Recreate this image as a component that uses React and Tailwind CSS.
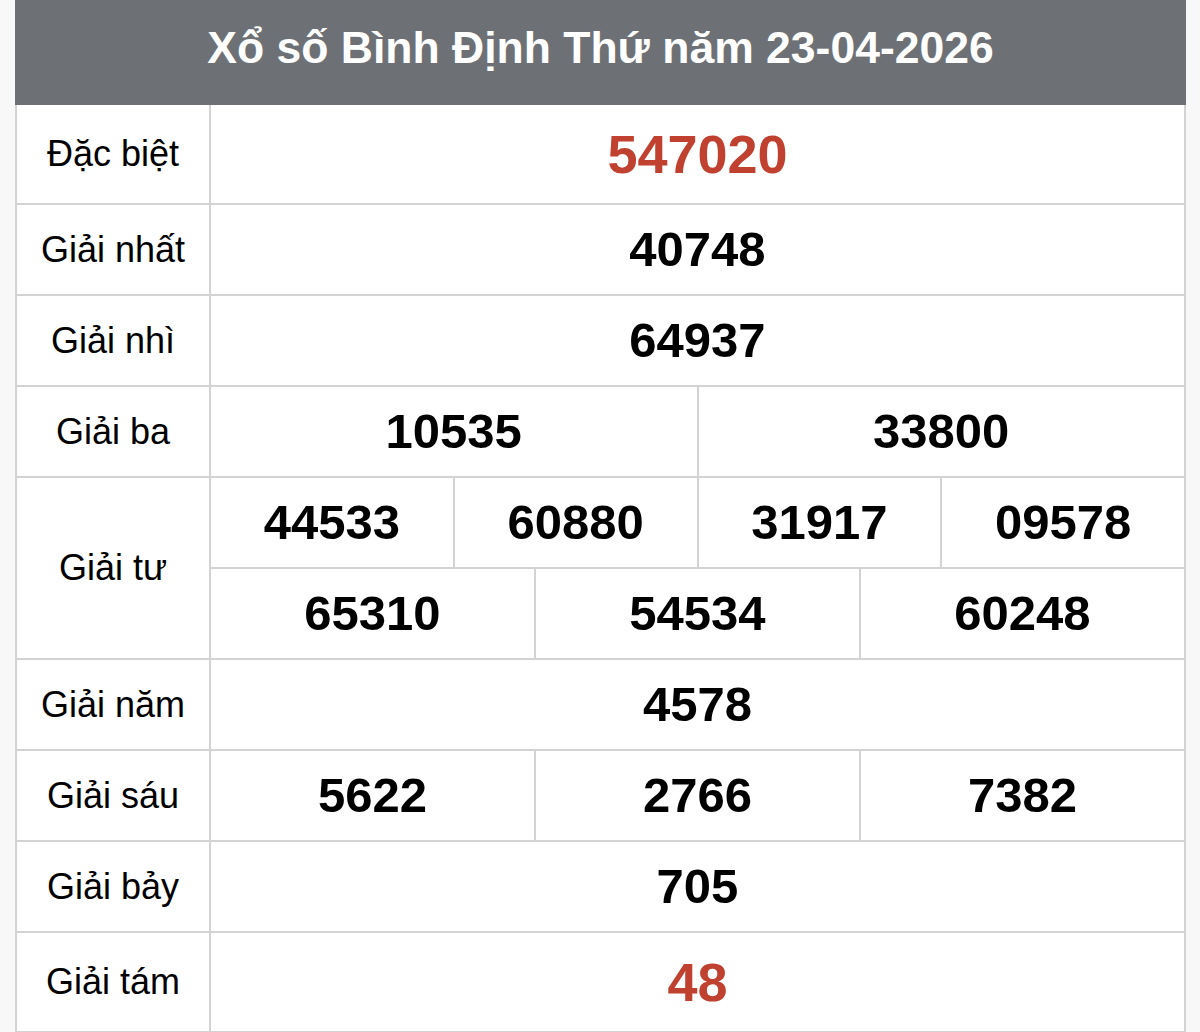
const rows = [
    { label: "Đặc biệt", values: [["547020"]], special: true, h: "h-[98px]" },
    { label: "Giải nhất", values: [["40748"]] },
    { label: "Giải nhì", values: [["64937"]] },
    { label: "Giải ba", values: [["10535", "33800"]] },
    {
        label: "Giải tư",
        values: [
            ["44533", "60880", "31917", "09578"],
            ["65310", "54534", "60248"],
        ],
    },
    { label: "Giải năm", values: [["4578"]] },
    { label: "Giải sáu", values: [["5622", "2766", "7382"]] },
    { label: "Giải bảy", values: [["705"]] },
    { label: "Giải tám", values: [["48"]], special: true, h: "h-[98px]" },
];

const PrizeRow = ({ row }) => {
    return (
        <div className="flex border-b-2 border-[#d3d3d3]">
            <div className="w-[194px] shrink-0 flex items-center justify-center border-r-2 border-[#d3d3d3] text-[36px] text-black">
                {row.label}
            </div>
            <div className="flex-1 flex flex-col">
                {row.values.map((line, i) => (
                    <div
                        key={i}
                        className={`flex ${
                            i < row.values.length - 1
                                ? "border-b-2 border-[#d3d3d3] h-[91px]"
                                : row.h || "h-[89px]"
                        }`}
                    >
                        {line.map((num, j) => (
                            <div
                                key={j}
                                className={`flex-1 flex items-center justify-center font-bold ${
                                    j > 0 ? "border-l-2 border-[#d3d3d3]" : ""
                                } ${
                                    row.special
                                        ? "text-[#c0412f] text-[54px]"
                                        : "text-black text-[49px]"
                                }`}
                            >
                                {num}
                            </div>
                        ))}
                    </div>
                ))}
            </div>
        </div>
    );
};

const App = () => {
    return (
        <div
            className="min-h-screen bg-[#f8f8f8] pl-[15px]"
            style={{ fontFamily: '"Liberation Sans", Arial, sans-serif' }}
        >
            <div className="w-[1171px] bg-white">
                <div className="h-[105px] pb-[9px] bg-[#6d7175] flex items-center justify-center text-white font-bold text-[44.5px]">
                    Xổ số Bình Định Thứ năm 23-04-2026
                </div>
                <div className="border-x-2 border-[#d3d3d3]">
                    {rows.map((row) => (
                        <PrizeRow key={row.label} row={row} />
                    ))}
                </div>
            </div>
        </div>
    );
};

export default App;
